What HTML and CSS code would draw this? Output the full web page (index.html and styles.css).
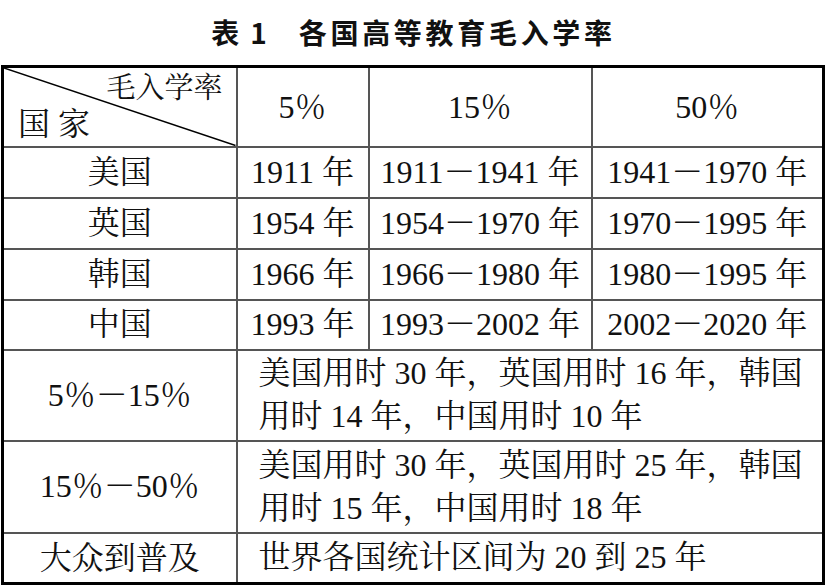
FILE: index.html
```html
<!DOCTYPE html>
<html lang="zh-CN">
<head>
<meta charset="utf-8">
<title>表1 各国高等教育毛入学率</title>
<link rel="stylesheet" href="styles.css">
</head>
<body>
<div class="page">
  <h1 class="title"><span>表</span><span class="tnum">1</span><span class="tmain">各国高等教育毛入学率</span></h1>
  <table class="grid">
    <colgroup><col class="c1"><col class="c2"><col class="c3"><col class="c4"></colgroup>
    <tr class="r-head">
      <td class="diag">
        <svg class="diag-line" viewBox="0 0 100 100" preserveAspectRatio="none"><line x1="0" y1="0" x2="100" y2="100" vector-effect="non-scaling-stroke"/></svg>
        <div class="diag-top">毛入学率</div>
        <div class="diag-bottom">国 家</div>
      </td>
      <td>5％</td>
      <td>15％</td>
      <td>50％</td>
    </tr>
    <tr class="r-data">
      <td>美国</td><td>1911 年</td><td>1911－1941 年</td><td>1941－1970 年</td>
    </tr>
    <tr class="r-data">
      <td>英国</td><td>1954 年</td><td>1954－1970 年</td><td>1970－1995 年</td>
    </tr>
    <tr class="r-data">
      <td>韩国</td><td>1966 年</td><td>1966－1980 年</td><td>1980－1995 年</td>
    </tr>
    <tr class="r-data r-last4">
      <td>中国</td><td>1993 年</td><td>1993－2002 年</td><td>2002－2020 年</td>
    </tr>
    <tr class="r-long">
      <td>5％－15％</td>
      <td colspan="3" class="long">美国用时 30 年，英国用时 16 年，韩国<br>用时 14 年，中国用时 10 年</td>
    </tr>
    <tr class="r-long r-long2">
      <td>15％－50％</td>
      <td colspan="3" class="long">美国用时 30 年，英国用时 25 年，韩国<br>用时 15 年，中国用时 18 年</td>
    </tr>
    <tr class="r-data">
      <td>大众到普及</td>
      <td colspan="3" class="long">世界各国统计区间为 20 到 25 年</td>
    </tr>
  </table>
</div>
</body>
</html>
```
FILE: styles.css
```css
* { box-sizing: border-box; }

body {
  margin: 0;
  background: #fff;
  color: #111;
}

.page {
  width: 827px;
}

.title {
  margin: 0;
  height: 65px;
  display: flex;
  justify-content: center;
  align-items: center;
  font-family: "Noto Sans CJK SC", sans-serif;
  font-weight: 700;
  font-size: 28px;
  line-height: 1;
  padding-bottom: 2px;
}

.tnum {
  margin-left: 11px;
}

.tmain {
  margin-left: 32px;
  letter-spacing: 3.7px;
}

.grid {
  border-collapse: collapse;
  table-layout: fixed;
  width: 824px;
  margin-left: 1px;
  border: 3px solid #000;
  font-family: "Liberation Serif", "Noto Serif CJK SC", "Noto Sans CJK SC", serif;
  font-size: 32px;
}

.c1 { width: 234px; }
.c2 { width: 132px; }
.c3 { width: 223px; }
.c4 { width: 232px; }

.grid td {
  border: 2px solid #555;
  padding: 0;
  text-align: center;
  vertical-align: middle;
  line-height: 1.2;
  white-space: nowrap;
}

.r-head { height: 80px; }
.r-data { height: 51px; }
.r-last4 { height: 50px; }
.r-long { height: 91px; }
.r-long2 { height: 92px; }

.grid td.diag {
  position: relative;
  vertical-align: top;
  padding: 2px 0 0;
}

.diag-line {
  position: absolute;
  left: 0;
  top: 0;
  width: 100%;
  height: 100%;
}

.diag-line line {
  stroke: #000;
  stroke-width: 1.5;
}

.diag-top {
  font-size: 29px;
  line-height: 36px;
  text-align: right;
  padding-right: 13px;
}

.diag-bottom {
  line-height: 36px;
  text-align: left;
  padding-left: 14px;
}

.grid td.long {
  text-align: left;
  padding-left: 21px;
  line-height: 43px;
}
```
